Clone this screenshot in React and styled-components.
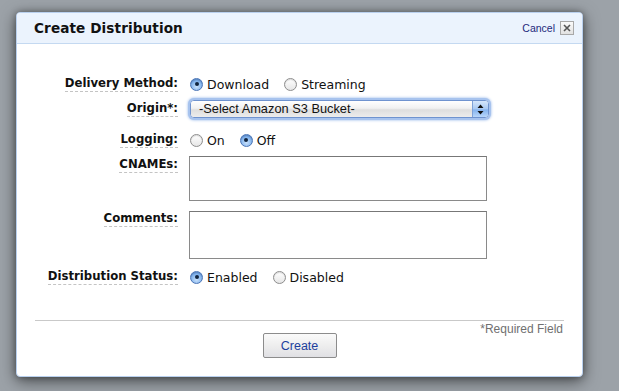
import React from 'react'
import styled, { createGlobalStyle } from 'styled-components'

const GlobalStyle = createGlobalStyle`
  html, body {
    margin: 0;
    padding: 0;
    background: #9ca2a8;
  }
  body {
    font-family: 'DejaVu Sans', Verdana, sans-serif;
  }
`

const Page = styled.div`
  width: 619px;
  height: 391px;
  padding: 12px 0 0 16px;
  box-sizing: border-box;
`

const Dialog = styled.div`
  width: 567px;
  height: 365px;
  box-sizing: border-box;
  background: #fff;
  border: 1px solid #b9d0ee;
  border-radius: 4px;
  box-shadow: 0 4px 16px rgba(0, 0, 0, 0.55), 0 0 6px rgba(0, 0, 0, 0.3);
  display: flex;
  flex-direction: column;
  overflow: hidden;
`

const Header = styled.div`
  height: 31px;
  flex-shrink: 0;
  box-sizing: border-box;
  background: #ebf3fd;
  border-bottom: 1px solid #c4d9f1;
  display: flex;
  align-items: center;
  justify-content: space-between;
  padding: 0 8px 0 17px;
`

const Title = styled.h1`
  margin: 0;
  font-size: 13.6px;
  font-weight: bold;
  color: #111;
  letter-spacing: 0.1px;
`

const CancelGroup = styled.div`
  display: flex;
  align-items: center;
  gap: 5px;
`

const CancelLink = styled.a`
  font-family: 'Liberation Sans', Arial, sans-serif;
  font-size: 10.5px;
  color: #1d2a7c;
  text-decoration: none;
`

const CloseBox = styled.span`
  width: 14px;
  height: 14px;
  box-sizing: border-box;
  border: 1px solid #a8a8a8;
  background: linear-gradient(#fafafa, #e2e2e2);
  display: flex;
  align-items: center;
  justify-content: center;
`

const Body = styled.div`
  flex: 1;
  padding: 30px 18px 0 18px;
  display: flex;
  flex-direction: column;
`

const Row = styled.div`
  display: flex;
  align-items: ${p => (p.$top ? 'flex-start' : 'center')};
  min-height: ${p => p.$h}px;
  margin-top: ${p => p.$mt || 0}px;
`

const Label = styled.div`
  width: 143px;
  flex-shrink: 0;
  display: flex;
  justify-content: flex-end;
  margin-right: 12px;
  padding-top: ${p => p.$pt || 0}px;
`

const LabelText = styled.span`
  font-size: 11.7px;
  font-weight: bold;
  color: #111;
  border-bottom: 1px dashed #c4c4c4;
  padding-bottom: 1px;
  line-height: 13px;
`

const RadioGroup = styled.div`
  display: flex;
  align-items: center;
  gap: 15px;
`

const RadioOption = styled.label`
  display: flex;
  align-items: center;
  gap: 4px;
  font-size: 12.5px;
  color: #111;
`

const RadioDot = styled.span`
  width: 13px;
  height: 13px;
  box-sizing: border-box;
  border-radius: 50%;
  display: flex;
  align-items: center;
  justify-content: center;
  border: 1px solid ${p => (p.$on ? '#4a74b6' : '#8d8d8d')};
  background: ${p =>
    p.$on
      ? 'radial-gradient(circle at 50% 70%, #c9e1fb 0%, #86b6ee 55%, #4f86d2 100%)'
      : 'linear-gradient(#ffffff, #e6e6e6)'};
  box-shadow: inset 0 1px 1px rgba(0, 0, 0, 0.15);

  &::after {
    content: '';
    width: 4px;
    height: 4px;
    border-radius: 50%;
    background: #10243f;
    display: ${p => (p.$on ? 'block' : 'none')};
  }
`

const SelectBox = styled.div`
  width: 299px;
  height: 18px;
  box-sizing: border-box;
  border: 1px solid #6f93cf;
  border-radius: 4px;
  box-shadow: 0 0 0 2px #a7c3ee, 0 0 3px 2px #8fb2e8;
  display: flex;
  overflow: hidden;
`

const SelectText = styled.div`
  flex: 1;
  font-family: 'Liberation Sans', Arial, sans-serif;
  font-size: 12.8px;
  line-height: 16px;
  padding-left: 8px;
  color: #111;
  background: linear-gradient(#ffffff 0%, #f1f1f1 45%, #dedede 55%, #ececec 100%);
`

const SelectArrows = styled.div`
  width: 15px;
  border-left: 1px solid #7fa2d8;
  background: linear-gradient(#d5e6fb 0%, #a9c9f3 50%, #84b3ee 55%, #b8d6fa 100%);
  display: flex;
  align-items: center;
  justify-content: center;
`

const TextArea = styled.textarea`
  width: 298px;
  height: ${p => p.$h}px;
  box-sizing: border-box;
  border: 1px solid #8a8a8a;
  border-top-color: #777;
  margin: 0 0 0 -1px;
  padding: 2px;
  resize: none;
  font-family: 'Liberation Sans', Arial, sans-serif;
  font-size: 12px;
`

const Footer = styled.div`
  margin-top: 33px;
  border-top: 1px solid #c9c9c9;
  display: flex;
  flex-direction: column;
  align-items: center;
`

const Required = styled.div`
  align-self: flex-end;
  font-family: 'Liberation Sans', Arial, sans-serif;
  font-size: 12px;
  color: #707070;
  line-height: 12px;
  margin-top: 2px;
  margin-right: 1px;
`

const Button = styled.button`
  width: 74px;
  height: 25px;
  margin-top: -2px;
  border: 1px solid #8c8c8c;
  border-radius: 2px;
  background: linear-gradient(#fafafa 0%, #eeeeee 50%, #e0e0e4 100%);
  font-family: 'Liberation Sans', Arial, sans-serif;
  font-size: 12.5px;
  color: #1d3f9d;
  padding: 0;
`

function Radio({ on, children }) {
  return (
    <RadioOption>
      <RadioDot $on={on} />
      {children}
    </RadioOption>
  )
}

export default function App() {
  return (
    <>
      <GlobalStyle />
      <Page>
        <Dialog>
          <Header>
            <Title>Create Distribution</Title>
            <CancelGroup>
              <CancelLink href='#'>Cancel</CancelLink>
              <CloseBox>
                <svg width='8' height='8' viewBox='0 0 8 8'>
                  <path d='M1 1 L7 7 M7 1 L1 7' stroke='#555' strokeWidth='1.6' />
                </svg>
              </CloseBox>
            </CancelGroup>
          </Header>
          <Body>
            <Row $h={20}>
              <Label>
                <LabelText>Delivery Method:</LabelText>
              </Label>
              <RadioGroup>
                <Radio on>Download</Radio>
                <Radio>Streaming</Radio>
              </RadioGroup>
            </Row>
            <Row $h={18} $mt={6}>
              <Label>
                <LabelText>Origin*:</LabelText>
              </Label>
              <SelectBox>
                <SelectText>-Select Amazon S3 Bucket-</SelectText>
                <SelectArrows>
                  <svg width='7' height='11' viewBox='0 0 7 11'>
                    <path d='M3.5 0.5 L6.5 4 L0.5 4 Z M3.5 10.5 L6.5 7 L0.5 7 Z' fill='#111' />
                  </svg>
                </SelectArrows>
              </SelectBox>
            </Row>
            <Row $h={20} $mt={12}>
              <Label>
                <LabelText>Logging:</LabelText>
              </Label>
              <RadioGroup>
                <Radio>On</Radio>
                <Radio on>Off</Radio>
              </RadioGroup>
            </Row>
            <Row $h={45} $mt={6} $top>
              <Label $pt={2}>
                <LabelText>CNAMEs:</LabelText>
              </Label>
              <TextArea $h={45} />
            </Row>
            <Row $h={48} $mt={10} $top>
              <Label $pt={1}>
                <LabelText>Comments:</LabelText>
              </Label>
              <TextArea $h={48} />
            </Row>
            <Row $h={20} $mt={8}>
              <Label>
                <LabelText>Distribution Status:</LabelText>
              </Label>
              <RadioGroup>
                <Radio on>Enabled</Radio>
                <Radio>Disabled</Radio>
              </RadioGroup>
            </Row>
            <Footer>
              <Required>*Required Field</Required>
              <Button>Create</Button>
            </Footer>
          </Body>
        </Dialog>
      </Page>
    </>
  )
}
